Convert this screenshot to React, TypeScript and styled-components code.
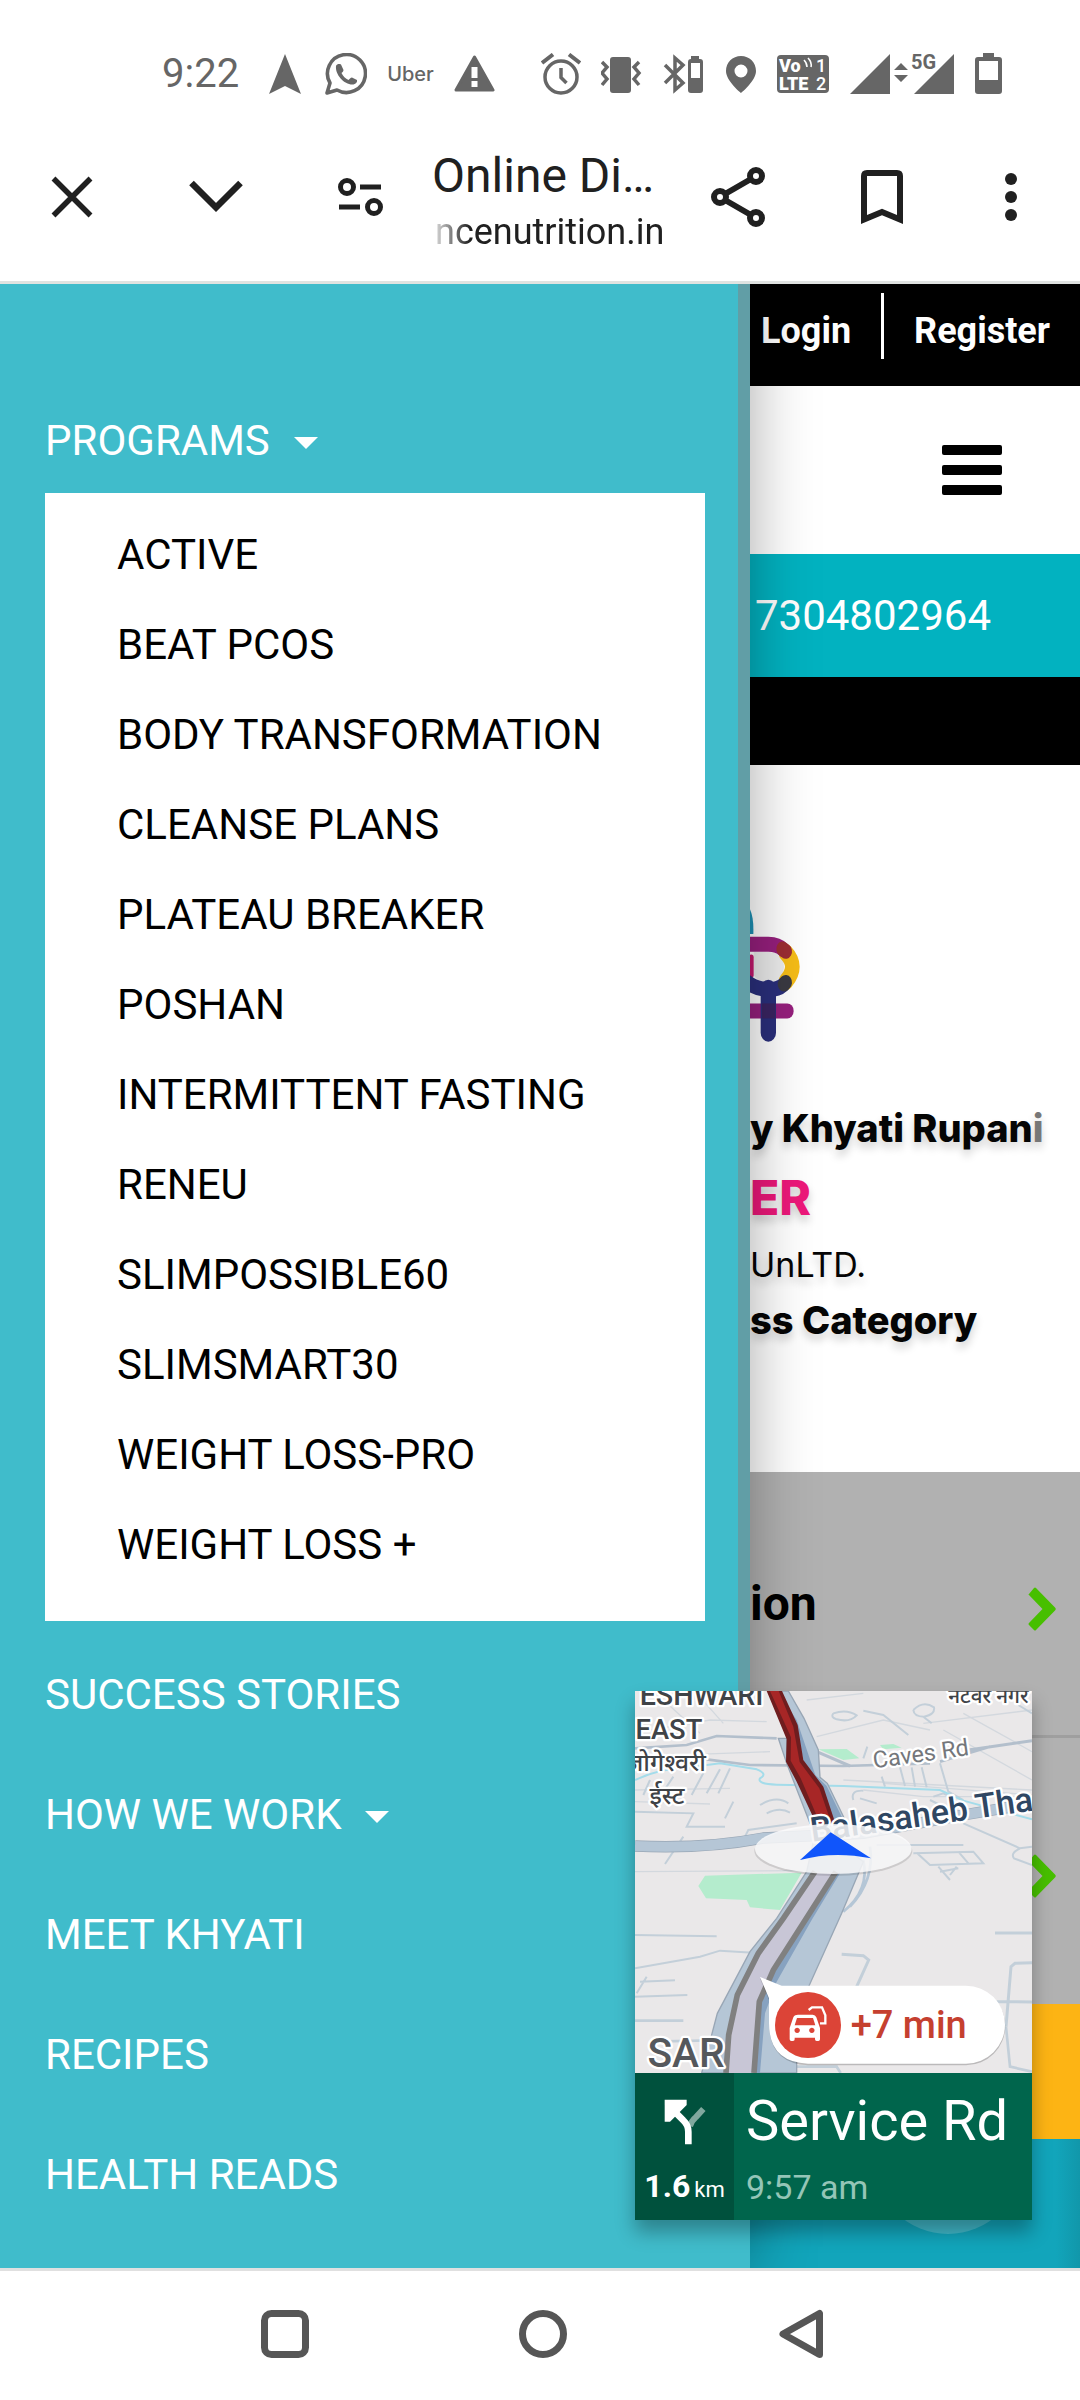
import React from "react";
import styled, { createGlobalStyle, css } from "styled-components";

const drawerWidth = "750px";
const ink = "#202020";
const statusGrey = "#666666";

const GlobalStyle = createGlobalStyle`
  *, *::before, *::after { box-sizing: border-box; }
  body { margin: 0; background: #ffffff; font-family: Roboto, "Noto Sans", sans-serif; }
  button { border: 0; padding: 0; background: none; font: inherit; color: inherit; cursor: pointer; }
  a { color: inherit; text-decoration: none; }
  ul { list-style: none; margin: 0; padding: 0; }
  p, h1, h2 { margin: 0; font-weight: inherit; }
  svg { display: block; flex: none; }
`;

const Screen = styled.div`
  min-height: 100vh;
  display: flex;
  flex-direction: column;
  overflow: hidden;
`;

/* ---------- status bar ---------- */

const StatusBar = styled.header`
  height: 113px;
  padding: 34px 78px 0 162px;
  display: flex;
  align-items: center;
  justify-content: space-between;
  color: ${statusGrey};
`;

const StatusGroup = styled.div`
  display: flex;
  align-items: center;
  gap: 20px;
`;

const Clock = styled.time`
  font-size: 40px;
  line-height: 48px;
`;

const UberMark = styled.span`
  font-family: Inter, sans-serif;
  font-size: 20px;
  font-weight: 500;
  line-height: 28px;
`;

/* ---------- browser toolbar ---------- */

const Toolbar = styled.div`
  height: 171px;
  padding-right: 12px;
  display: flex;
  align-items: stretch;
  color: ${ink};
  border-bottom: 3px solid #e0e3e1;
`;

const ToolButton = styled.button<{ $narrow?: boolean }>`
  width: ${(p) => (p.$narrow ? "114px" : "144px")};
  display: flex;
  align-items: center;
  justify-content: center;
`;

const PageInfo = styled.div`
  flex: 1;
  min-width: 0;
  padding-top: 10px;
  display: flex;
  flex-direction: column;
  justify-content: center;
  white-space: nowrap;
  overflow: hidden;
`;

const PageTitle = styled.h1`
  font-size: 48px;
  line-height: 60px;
`;

const PageHost = styled.p`
  padding-left: 3px;
  font-size: 36px;
  line-height: 52px;
  mask-image: linear-gradient(to right, rgba(0, 0, 0, 0.1), #000 38px);
`;

/* ---------- web page below the drawer ---------- */

const Stage = styled.main`
  position: relative;
  flex: 1;
  display: flex;
  flex-direction: column;
  overflow: hidden;
`;

const AccountBar = styled.div`
  height: 102px;
  padding: 9px 30px 27px;
  display: flex;
  align-items: flex-end;
  justify-content: flex-end;
  gap: 30px;
  background: #000000;
  color: #ffffff;
  font-size: 36px;
  font-weight: 700;
  line-height: 56px;
`;

const AccountDivider = styled.span`
  width: 3px;
  height: 66px;
  background: #ffffff;
`;

const SiteHeader = styled.div`
  height: 168px;
  padding-right: 78px;
  display: flex;
  align-items: center;
  justify-content: flex-end;
  background: #ffffff;
`;

const Burger = styled.button`
  width: 60px;
  display: grid;
  gap: 10px;
`;

const BurgerBar = styled.span`
  height: 10px;
  border-radius: 2px;
  background: #000000;
`;

const PhoneBar = styled.div`
  height: 123px;
  padding-right: 89px;
  display: flex;
  align-items: center;
  justify-content: flex-end;
  background: #02b2c0;
  color: #ffffff;
  font-size: 42px;
`;

const BlackBand = styled.div`
  height: 88px;
  background: #000000;
`;

const Banner = styled.section`
  height: 707px;
  padding: 131px 0 0 ${drawerWidth};
  background: #ffffff;
  color: #050505;
  font-family: Inter, sans-serif;
  font-size: 38px;
  white-space: nowrap;
`;

const BannerLine = styled.p<{ $bold?: boolean; $height: number }>`
  line-height: ${(p) => p.$height}px;
  font-weight: ${(p) => (p.$bold ? 800 : 400)};
  text-shadow: 0 6px 8px rgba(0, 0, 0, 0.18);
`;

const BannerName = styled(BannerLine)`
  margin-top: 46px;
`;

const BannerAccent = styled(BannerLine)`
  color: #ed187a;
  font-size: 48px;
`;

const BannerNote = styled(BannerLine)`
  font-size: 34px;
`;

const FadedLetter = styled.span`
  color: #777777;
`;

const PanelRow = styled.a<{ $divided?: boolean }>`
  height: 266px;
  padding: 10px 24px 0 ${drawerWidth};
  display: flex;
  align-items: center;
  justify-content: space-between;
  background: #b1b1b1;
  color: #000000;
  font-size: 48px;
  font-weight: 700;
  ${(p) => p.$divided && css`border-bottom: 3px solid #9f9f9f;`}
`;

const PanelLabel = styled.span`
  padding-bottom: 10px;
`;

const YellowBand = styled.div`
  height: 135px;
  background: #fdb414;
`;

const FooterBand = styled.div`
  position: relative;
  flex: 1;
  min-height: 120px;
  background: linear-gradient(to left, #1197aa, #12a5bb 24px);
`;

const FloatingCircle = styled.span`
  position: absolute;
  right: 58px;
  bottom: 34px;
  width: 148px;
  height: 148px;
  border-radius: 50%;
  background: #40b7c8;
`;

/* ---------- drawer ---------- */

const Drawer = styled.nav`
  position: absolute;
  inset: 0 auto 0 0;
  width: ${drawerWidth};
  max-width: 100%;
  padding: 103px 45px 0;
  background: #40bccb;
  color: #ffffff;
  font-size: 42px;
  box-shadow: 0 0 60px rgba(0, 0, 0, 0.34);
`;

const ScrollThumb = styled.span`
  position: absolute;
  top: 0;
  right: 0;
  width: 12px;
  height: 80%;
  background: #619ea6;
`;

const Menu = styled.ul`
  display: grid;
  gap: 14px;
`;

const MenuLink = styled.a`
  height: 106px;
  display: flex;
  align-items: center;
  gap: 24px;
`;

const MenuToggle = styled.button`
  height: 106px;
  display: flex;
  align-items: center;
  gap: 24px;
`;

const Caret = styled.span`
  margin-top: 6px;
  border: 12px solid transparent;
  border-top-color: #ffffff;
  border-bottom-width: 0;
`;

const Submenu = styled.ul`
  margin-bottom: 6px;
  padding: 17px 0 31px 72px;
  background: #ffffff;
  color: #000000;
`;

const SubmenuLink = styled.a`
  display: block;
  line-height: 90px;
`;

/* ---------- picture-in-picture navigation ---------- */

const Pip = styled.aside`
  position: absolute;
  right: 48px;
  bottom: 48px;
  width: 397px;
  color: #ffffff;
  box-shadow: 0 12px 18px rgba(0, 0, 0, 0.3);
`;

const Directions = styled.div`
  height: 147px;
  display: grid;
  grid-template-columns: 99px 1fr;
`;

const TurnCell = styled.div`
  padding: 26px 0 12px;
  display: flex;
  flex-direction: column;
  align-items: center;
  justify-content: space-between;
  background: #00513d;
`;

const Distance = styled.p`
  display: flex;
  align-items: baseline;
  gap: 4px;
  font-size: 32px;
  font-weight: 700;
  line-height: 36px;
`;

const Unit = styled.small`
  font-size: 22px;
  font-weight: 400;
`;

const RoadCell = styled.div`
  padding: 10px 0 0 12px;
  background: #00654c;
  white-space: nowrap;
`;

const RoadName = styled.p`
  font-size: 56px;
  line-height: 76px;
`;

const Arrival = styled.p`
  font-size: 34px;
  line-height: 56px;
  color: #94c5b7;
`;

/* ---------- system navigation ---------- */

const SystemBar = styled.footer`
  height: 132px;
  padding: 0 0 3px 6px;
  display: flex;
  justify-content: center;
  border-top: 3px solid #e0e0e0;
  color: #565656;
`;

const SystemButton = styled.button`
  width: 258px;
  display: flex;
  align-items: center;
  justify-content: center;
`;

/* ---------- icons ---------- */

const NavArrowIcon = () => (
  <svg width="46" height="42" viewBox="0 0 46 42" fill="currentColor">
    <path d="M26 1 L42 41 L26 33 L10 41 Z" />
  </svg>
);

const WhatsAppIcon = () => (
  <svg width="42" height="42" viewBox="0 0 42 42">
    <path
      d="M2 40 L5 30 A19 19 0 1 1 12 37 Z"
      fill="none"
      stroke="currentColor"
      strokeWidth="3.6"
      strokeLinejoin="round"
    />
    <path
      d="M11 13 C12 11 14 10.500 16 11.500 L18.500 17 C18.500 18.500 17 19.500 16.500 20 C18 23.500 20.500 25.500 23.500 27 C24.500 26 25.500 24.500 27 24.500 L32 27 C32.500 29 31 31 28.500 31.500 C20 32.500 10 22 11 13 Z"
      fill="currentColor"
    />
  </svg>
);

const WarningIcon = () => (
  <svg width="41" height="42" viewBox="0 0 41 42">
    <path d="M20.500 4 L39 37 H2 Z" fill="currentColor" stroke="currentColor" strokeWidth="3" strokeLinejoin="round" />
    <path d="M17.500 14 H23.500 V25 H17.500 Z M17.500 28 H23.500 V34 H17.500 Z" fill="#fff" />
  </svg>
);

const AlarmIcon = () => (
  <svg width="40" height="42" viewBox="0 0 40 42" fill="none" stroke="currentColor" strokeWidth="3.500">
    <circle cx="20" cy="24" r="16" />
    <path d="M1 10 L12 1.500 M28 1.500 L39 10" strokeWidth="4" />
    <path d="M20 15 V24.500 L25.500 30" />
  </svg>
);

const VibrateIcon = () => (
  <svg width="42" height="42" viewBox="0 0 42 42">
    <rect x="9" y="4" width="21" height="36" rx="3" fill="currentColor" />
    <path
      d="M1 9 L6 14 L1 20 L6 26 L1 32 M38 9 L33 14 L38 20 L33 26 L38 32"
      fill="none"
      stroke="currentColor"
      strokeWidth="3.500"
    />
  </svg>
);

const BluetoothIcon = () => (
  <svg width="42" height="42" viewBox="0 0 42 42">
    <path d="M2 12 L20 30 L12 37 V5 L20 12 L2 30" fill="none" stroke="currentColor" strokeWidth="3.500" />
    <path d="M28 3 h8 v3 h1 q3 0 3 3 v28 q0 3 -3 3 h-9 q-3 0 -3 -3 v-28 q0 -3 3 -3 Z" fill="currentColor" />
    <rect x="28" y="10" width="9" height="15" fill="#fff" />
  </svg>
);

const PinIcon = () => (
  <svg width="32" height="42" viewBox="0 0 32 42">
    <path
      fillRule="evenodd"
      fill="currentColor"
      d="M16 3 C7.500 3 1 9.500 1 18 C1 28 16 40 16 40 C16 40 31 28 31 18 C31 9.500 24.500 3 16 3 Z M16 11.500 a6.500 6.500 0 1 1 0 13 a6.500 6.500 0 1 1 0 -13 Z"
    />
  </svg>
);

const VolteIcon = () => (
  <svg width="53" height="42" viewBox="0 0 53 42" fontFamily="Roboto, sans-serif" fontWeight="900">
    <rect x="0" y="2" width="52" height="38" rx="4" fill="currentColor" />
    <g fill="#fff">
      <text x="2" y="19" fontSize="18">Vo</text>
      <text x="2" y="37" fontSize="18">LTE</text>
      <text x="39" y="19" fontSize="18" fontWeight="500">1</text>
      <text x="39" y="37" fontSize="18" fontWeight="500">2</text>
    </g>
    <path d="M27 7 q3 3 3 7 M31 5 q4 4 3 9" fill="none" stroke="#fff" strokeWidth="1.600" />
  </svg>
);

const SignalIcon = () => (
  <svg width="105" height="42" viewBox="0 0 105 42" fill="currentColor">
    <path d="M0 41 L40 1 V41 Z M64 41 L104 1 V41 Z" />
    <path d="M44 17 L51 10 L58 17 Z M44 22 H58 L51 29 Z" />
    <text x="61" y="16" fontSize="20" fontFamily="Roboto, sans-serif" fontWeight="700" stroke="#fff" strokeWidth="3" paintOrder="stroke">5G</text>
  </svg>
);

const BatteryIcon = () => (
  <svg width="27" height="42" viewBox="0 0 27 42">
    <path d="M8 0 H19 V4 H24 q3 0 3 3 V38 q0 3 -3 3 H3 q-3 0 -3 -3 V7 q0 -3 3 -3 H8 Z" fill="currentColor" />
    <rect x="4" y="8" width="19" height="19" fill="#fff" />
  </svg>
);

const CloseIcon = () => (
  <svg width="48" height="48" viewBox="0 0 48 48" stroke="currentColor" strokeWidth="5.500">
    <path d="M5.500 5.500 L42.500 42.500 M42.500 5.500 L5.500 42.500" />
  </svg>
);

const ChevronDownIcon = () => (
  <svg width="56" height="36" viewBox="0 0 56 36" fill="none" stroke="currentColor" strokeWidth="6.500">
    <path d="M3.500 4 L28 28.500 L52.500 4" />
  </svg>
);

const TuneIcon = () => (
  <svg width="48" height="42" viewBox="0 0 48 42" fill="none" stroke="currentColor" strokeWidth="5">
    <circle cx="11" cy="11" r="6.500" />
    <circle cx="38" cy="31" r="6.500" />
    <path d="M24 11 H45 M3 31 H24" />
  </svg>
);

const ShareIcon = () => (
  <svg width="56" height="62" viewBox="0 0 56 62" fill="none" stroke="currentColor" strokeWidth="6">
    <circle cx="10" cy="31" r="6" />
    <circle cx="46" cy="10" r="6" />
    <circle cx="46" cy="52" r="6" />
    <path d="M15 28 L41 13 M15 34 L41 49" />
  </svg>
);

const BookmarkIcon = () => (
  <svg width="42" height="54" viewBox="0 0 42 54">
    <path d="M3 49.500 V6 q0 -3 3 -3 H36 q3 0 3 3 V49.500 L21 42 Z" fill="none" stroke="currentColor" strokeWidth="6" />
  </svg>
);

const MoreIcon = () => (
  <svg width="12" height="48" viewBox="0 0 12 48" fill="currentColor">
    <circle cx="6" cy="6" r="6" />
    <circle cx="6" cy="24" r="6" />
    <circle cx="6" cy="42" r="6" />
  </svg>
);

const ChevronRightIcon = () => (
  <svg width="28" height="44" viewBox="0 0 28 44" fill="#47bf00">
    <path d="M1 7 L6 1 Q7 0 8 1 L27 20.500 Q28.500 22 27 23.500 L8 43 Q7 44 6 43 L1 38 Q0 37 1 36 L14.500 22 L1 8 Q0 7.500 1 7 Z" />
  </svg>
);

const BrandMark = () => (
  <svg width="53" height="154" viewBox="150 90 159 390" preserveAspectRatio="none" fill="none" strokeLinecap="round">
    <path d="M120 186 Q120 105 145 116 Q162 136 160 186 Z" fill="#1d91b5" />
    <path d="M161 290 V232 H205 Q252 232 252 270 Q250 308 205 309 Q175 309 161 290 Z" fill="#ececec" />
    <path d="M154 245 V290" stroke="#c4186e" strokeWidth="14" />
    <path d="M130 381 H262" stroke="#961f7d" strokeWidth="38" />
    <path d="M258 234 Q296 268 258 306" stroke="#f6bd17" strokeWidth="44" />
    <path d="M120 212 H205 Q235 212 250 226" stroke="#961f7d" strokeWidth="38" />
    <path d="M120 290 Q155 326 205 327 Q235 327 250 315" stroke="#2a2f7c" strokeWidth="38" />
    <path d="M205 325 V436" stroke="#2a2f7c" strokeWidth="46" />
    <path d="M186 362 H226 V400 H186 Z" fill="#3a2462" />
    <path d="M248 224 L257 230" stroke="#9c2d33" strokeWidth="38" />
    <path d="M257 309 L252 313" stroke="#3a3a42" strokeWidth="38" />
  </svg>
);

const TurnIcon = () => (
  <svg width="42" height="46" viewBox="0 0 126 138" fill="none">
    <path d="M78 82 Q82 66 96 54 L118 30" stroke="#80a89e" strokeWidth="18" />
    <path d="M73 136 V98 Q73 78 58 64 L20 26" stroke="#fff" strokeWidth="20" />
    <path d="M2 2 H68 V18 L18 68 H2 Z" fill="#fff" />
  </svg>
);

const MapView = () => (
  <svg width="397" height="382" viewBox="15 33 1191 1146" role="img" aria-label="Map" fontFamily="Roboto, 'Noto Sans', sans-serif">
    <rect x="15" y="33" width="1191" height="1146" fill="#eae8e9" />

    <g fill="#b4eccd">
      <path d="M225 587 L515 578 L450 690 L360 682 L350 660 L228 655 L205 618 Z" />
      <path d="M565 208 L650 207 L688 235 L640 240 Z M750 195 L790 192 L815 203 L760 208 Z" />
    </g>

    <g fill="none" stroke="#d3d8de" strokeWidth="4">
      <path d="M60 150 L240 120 L410 125 M100 60 L210 160 M200 40 L280 130 M15 230 L420 215" />
      <path d="M530 60 L700 40 M560 170 L760 120 L900 150 M940 150 L1206 300 M880 130 L1206 90" />
      <path d="M15 330 L300 325 M15 365 L240 372 M640 300 L1206 330 M760 310 L1206 345" />
      <path d="M15 575 L510 572 M700 330 L880 350 L1206 350 M1000 100 L1206 215" />
    </g>
    <g fill="none" stroke="#c3cfd9" strokeWidth="6">
      <path d="M15 205 L170 195 L260 168 L440 175 M15 240 L230 238 L360 255 L640 258 L900 250" stroke="#b3bfcc" strokeWidth="8" />
      <path d="M610 100 q40 -14 70 6 q-20 22 -60 12 q-20 -6 -10 -18 M700 92 L760 105 L835 165" />
      <path d="M850 90 q30 -30 62 -8 q4 22 -30 28 q-30 0 -32 -20 M880 110 L905 130 M1165 75 L1206 100" />
      <path d="M755 290 L765 320 M810 262 L825 318 M845 262 L855 320 M875 262 L890 322 M930 250 L955 335 L1000 360" />
      <path d="M700 235 L712 200 M225 270 L185 345 M270 268 L230 340 M300 265 L265 340 M60 300 L40 345 M130 290 L90 350" />
      <path d="M15 395 L190 400 L170 440 L285 440 M310 365 L285 415 M390 375 q50 -30 85 -5 M410 400 q40 -20 70 -2" />
      <path d="M160 470 L105 552 M345 470 L355 450 L500 430 M670 360 q-10 -30 30 -28 M690 355 L740 370" />
      <path d="M740 495 L1000 495 M860 518 L900 555 L1060 550 L1030 515 L850 520 M985 515 L1015 550 M925 560 L960 600 M980 560 L960 585 M930 575 L985 565" />
      <path d="M1000 430 L1170 505 L1206 500 M1170 505 q-30 15 -18 30 L1206 555" />
      <path d="M15 765 L260 769 M15 865 L210 830 L270 812 L370 818 M30 905 L135 901 M15 950 L172 945 M50 890 L20 940" />
      <path d="M635 823 L700 827 L716 840 L680 920 M1095 759 L1206 759 M1206 848 L1155 850 L1143 860 L1128 1040 M1100 965 L1206 966" strokeWidth="9" />
      <path d="M1128 1040 L1140 1160 L1206 1175 M490 1160 H620 L632 1179 M15 1022 L160 1022 M60 1085 L300 1080" strokeWidth="8" />
      <path d="M910 350 L940 340 L960 350 M900 360 L930 375" />
    </g>
    <path d="M1000 212 L1206 182 M560 215 L660 258 M930 245 L1080 200" fill="none" stroke="#b3bfcc" strokeWidth="9" />
    <path
      d="M15 300 Q90 265 180 262 L270 250 L380 268 Q415 282 390 295 Q380 312 440 314 L640 318 L930 330 L1000 362 L1206 418"
      fill="none"
      stroke="#a4dcea"
      strokeWidth="6"
    />

    <path d="M15 498 Q220 508 400 474 L700 460 L1000 405 L1206 370" fill="none" stroke="#98a6b5" strokeWidth="34" />
    <path d="M15 498 Q220 508 400 474 L700 460 L1000 405 L1206 370" fill="none" stroke="#b5c6d6" strokeWidth="30" />

    <path d="M700 540 Q720 630 640 695 M720 500 Q735 600 660 680" fill="none" stroke="#b5c6d6" strokeWidth="8" />
    <g stroke="#98a6b5" strokeWidth="4">
      <path d="M445 175 L470 250 L540 430 L570 430 L520 330 L470 230 L470 175 Z" fill="#b5c6d6" />
      <path d="M440 33 L475 33 L522 115 L565 210 L570 292 L592 310 L650 430 L590 440 L500 230 Z" fill="#b5c6d6" />
      <path d="M530 575 L440 715 L360 815 L262 1000 L215 1179 L500 1179 L500 1000 L635 700 L700 545 L560 440 Z" fill="#b5c6d6" />
    </g>
    <path d="M442 33 L500 120 L556 285 L590 318 L640 420 L606 430 L520 240 L500 150 Z" fill="#87a2c0" />
    <path d="M630 580 L545 720 L440 905 L405 1000 L390 1179 L378 1179 L385 960 L540 690 L605 580 Z" fill="#87a2c0" />
    <path
      d="M555 575 L460 715 L385 820 L325 945 L300 1080 L290 1179 H372 L385 960 L440 865 L545 690 L620 575 Z"
      fill="#c8c6d6"
    />
    <g fill="none" stroke="#808080" strokeWidth="17">
      <path d="M555 575 L460 715 L385 820 L322 945 L296 1065 L288 1179" />
      <path d="M618 575 L545 690 L430 870 L388 965 L372 1179" />
    </g>
    <path d="M410 33 L456 33 L503 135 L520 240 L580 320 L616 430 L558 430 L500 305 L468 245 L470 178 Z" fill="#6f1d1f" />
    <path d="M420 33 L446 33 L490 140 L509 246 L568 325 L604 430 L570 430 L512 295 L482 242 L483 172 Z" fill="#a72626" />

    <g fontWeight="500" stroke="#fff" strokeWidth="14" strokeLinejoin="round" paintOrder="stroke">
      <g fill="#3f4347">
        <text x="400" y="75" fontSize="86" textAnchor="end">ESHWARI</text>
        <text x="217" y="177" fontSize="82" textAnchor="end">EAST</text>
        <text x="228" y="274" fontSize="74" textAnchor="end">जोगेश्वरी</text>
        <text x="163" y="372" fontSize="74" textAnchor="end">ईस्ट</text>
        <text x="1196" y="70" fontSize="62" textAnchor="end">नटवर नगर</text>
      </g>
      <text x="284" y="1161" fontSize="122" textAnchor="end" fill="#55585c">SAR</text>
      <text x="732" y="265" fontSize="70" fontWeight="400" fill="#74777b" transform="rotate(-8 732 265)">Caves Rd</text>
      <text x="546" y="485" fontSize="102" fill="#2f4763" transform="rotate(-8 546 485)">Balasaheb Tha</text>
    </g>

    <ellipse cx="610" cy="513" rx="237" ry="75" fill="#000" opacity="0.12" />
    <ellipse cx="610" cy="507" rx="235" ry="75" fill="#fbfcfd" opacity="0.84" />
    <path d="M602 457 L723 535 Q610 512 510 540 Z" fill="#1055fb" />

    <path d="M390 895 L455 920 H1008 a117 117 0 0 1 0 236 H534 Q417 1150 417 1030 V960 Z" fill="#000" opacity="0.2" />
    <path d="M390 891 L455 917 H1008 a117 117 0 0 1 0 234 H534 Q417 1146 417 1030 V955 Z" fill="#fff" />
    <circle cx="534" cy="1035" r="99" fill="#dc4437" />
    <path d="M536 990 L546 982 H576 L586 1006 V1030 H570" fill="none" stroke="#fff" strokeWidth="7" />
    <path
      fill="#fff"
      fillRule="evenodd"
      d="M496 1006 Q500 1004 504 1004 H548 Q556 1004 559 1012 L570 1044 V1078 q0 5 -5 5 h-5 q-5 0 -5 -5 V1073 H494 V1078 q0 5 -5 5 h-5 q-5 0 -5 -5 V1044 L490 1012 Q492 1007 496 1006 Z M501 1014 L494 1036 H556 L549 1014 Z M501 1043 a8 8 0 1 0 1 0 Z M545 1043 a8 8 0 1 0 1 0 Z"
    />
    <text x="662" y="1075" fontSize="114" fontWeight="500" fill="#c5402f">+7 min</text>
  </svg>
);

/* ---------- data ---------- */

const programs = [
  "ACTIVE",
  "BEAT PCOS",
  "BODY TRANSFORMATION",
  "CLEANSE PLANS",
  "PLATEAU BREAKER",
  "POSHAN",
  "INTERMITTENT FASTING",
  "RENEU",
  "SLIMPOSSIBLE60",
  "SLIMSMART30",
  "WEIGHT LOSS-PRO",
  "WEIGHT LOSS +",
];

export default function App() {
  return (
    <Screen>
      <GlobalStyle />
      <StatusBar>
        <StatusGroup>
          <Clock>9:22</Clock>
          <NavArrowIcon />
          <WhatsAppIcon />
          <UberMark>Uber</UberMark>
          <WarningIcon />
        </StatusGroup>
        <StatusGroup>
          <AlarmIcon />
          <VibrateIcon />
          <BluetoothIcon />
          <PinIcon />
          <VolteIcon />
          <SignalIcon />
          <BatteryIcon />
        </StatusGroup>
      </StatusBar>

      <Toolbar>
        <ToolButton aria-label="Close tab"><CloseIcon /></ToolButton>
        <ToolButton aria-label="Minimise"><ChevronDownIcon /></ToolButton>
        <ToolButton aria-label="Site settings"><TuneIcon /></ToolButton>
        <PageInfo>
          <PageTitle>Online Di…</PageTitle>
          <PageHost>ncenutrition.in</PageHost>
        </PageInfo>
        <ToolButton aria-label="Share"><ShareIcon /></ToolButton>
        <ToolButton aria-label="Bookmark"><BookmarkIcon /></ToolButton>
        <ToolButton aria-label="More options" $narrow><MoreIcon /></ToolButton>
      </Toolbar>

      <Stage>
        <AccountBar>
          <a href="#login">Login</a>
          <AccountDivider />
          <a href="#register">Register</a>
        </AccountBar>
        <SiteHeader>
          <Burger aria-label="Menu">
            <BurgerBar />
            <BurgerBar />
            <BurgerBar />
          </Burger>
        </SiteHeader>
        <PhoneBar><a href="tel:7304802964">7304802964</a></PhoneBar>
        <BlackBand />
        <Banner>
          <BrandMark />
          <BannerName $bold $height={64}>y Khyati Rupan<FadedLetter>i</FadedLetter></BannerName>
          <BannerAccent $bold $height={76}>ER</BannerAccent>
          <BannerNote $height={58}>UnLTD.</BannerNote>
          <BannerLine $bold $height={52}>ss Category</BannerLine>
        </Banner>
        <PanelRow href="#consultation" $divided>
          <PanelLabel>ion</PanelLabel>
          <ChevronRightIcon />
        </PanelRow>
        <PanelRow href="#next" aria-label="Next">
          <PanelLabel />
          <ChevronRightIcon />
        </PanelRow>
        <YellowBand />
        <FooterBand><FloatingCircle /></FooterBand>

        <Drawer aria-label="Site">
          <Menu>
            <li>
              <MenuToggle aria-expanded="true">PROGRAMS<Caret /></MenuToggle>
              <Submenu>
                {programs.map((name) => (
                  <li key={name}><SubmenuLink href="#program">{name}</SubmenuLink></li>
                ))}
              </Submenu>
            </li>
            <li><MenuLink href="#stories">SUCCESS STORIES</MenuLink></li>
            <li><MenuToggle aria-expanded="false">HOW WE WORK<Caret /></MenuToggle></li>
            <li><MenuLink href="#khyati">MEET KHYATI</MenuLink></li>
            <li><MenuLink href="#recipes">RECIPES</MenuLink></li>
            <li><MenuLink href="#reads">HEALTH READS</MenuLink></li>
          </Menu>
          <ScrollThumb />
        </Drawer>

        <Pip aria-label="Navigation">
          <MapView />
          <Directions>
            <TurnCell>
              <TurnIcon />
              <Distance>1.6<Unit>km</Unit></Distance>
            </TurnCell>
            <RoadCell>
              <RoadName>Service Rd</RoadName>
              <Arrival>9:57 am</Arrival>
            </RoadCell>
          </Directions>
        </Pip>
      </Stage>

      <SystemBar>
        <SystemButton aria-label="Recent apps">
          <svg width="48" height="48" viewBox="0 0 48 48"><rect x="3.500" y="3.500" width="41" height="41" rx="7" fill="none" stroke="currentColor" strokeWidth="7" /></svg>
        </SystemButton>
        <SystemButton aria-label="Home">
          <svg width="48" height="48" viewBox="0 0 48 48"><circle cx="24" cy="24" r="20.500" fill="none" stroke="currentColor" strokeWidth="7" /></svg>
        </SystemButton>
        <SystemButton aria-label="Back">
          <svg width="46" height="50" viewBox="0 0 46 50"><path d="M41.500 4.500 V45.500 L5 25 Z" fill="none" stroke="currentColor" strokeWidth="7" strokeLinejoin="round" /></svg>
        </SystemButton>
      </SystemBar>
    </Screen>
  );
}
